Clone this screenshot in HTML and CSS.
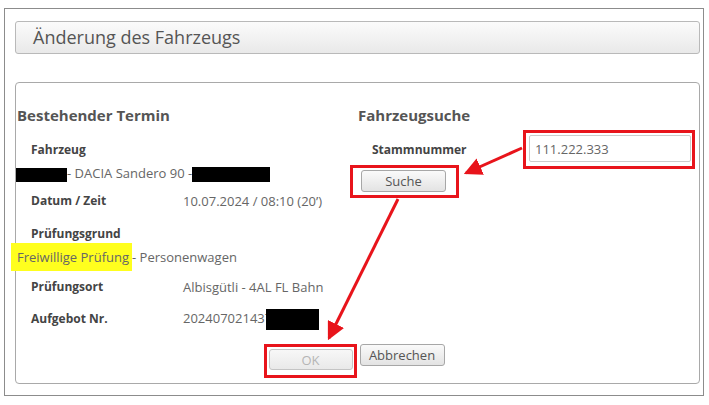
FILE: index.html
```html
<!DOCTYPE html>
<html lang="de">
<head>
  <meta charset="UTF-8">
  <meta name="viewport" content="width=device-width, initial-scale=1.0">
  <title>Änderung des Fahrzeugs</title>
  <link rel="stylesheet" href="styles.css">
</head>
<body>
  <div class="dialog">
    <div class="dialog-title">Änderung des Fahrzeugs</div>

    <div class="panel">
      <div class="columns">
        <div class="col">
          <h3>Bestehender Termin</h3>

          <div class="caption caption-first">Fahrzeug</div>
          <div class="line"><span class="redact redact-a"></span>- DACIA Sandero 90 -<span class="redact redact-b"></span></div>

          <div class="field field-date">
            <span class="label">Datum / Zeit</span>
            <span class="value">10.07.2024 / 08:10 (20’)</span>
          </div>

          <div class="caption">Prüfungsgrund</div>
          <div class="line"><span class="highlight">Freiwillige Prüfung</span>- Personenwagen</div>

          <div class="field field-place">
            <span class="label">Prüfungsort</span>
            <span class="value">Albisgütli - 4AL FL Bahn</span>
          </div>

          <div class="field field-number">
            <span class="label">Aufgebot Nr.</span>
            <span class="value">202407021437<span class="redact redact-c"></span></span>
          </div>
        </div>

        <div class="col">
          <h3>Fahrzeugsuche</h3>

          <div class="search-row">
            <label class="label search-label" for="stammnummer">Stammnummer</label>
            <span class="mark mark-input">
              <input type="text" id="stammnummer" value="111.222.333">
            </span>
          </div>

          <span class="mark mark-search">
            <button type="button" class="btn">Suche</button>
          </span>
        </div>
      </div>

      <div class="actions">
        <span class="mark mark-ok">
          <button type="button" class="btn" disabled>OK</button>
        </span>
        <button type="button" class="btn">Abbrechen</button>
      </div>
    </div>
  </div>

  <!-- annotation arrows drawn over the screenshot -->
  <svg class="arrows" width="709" height="405" viewBox="0 0 709 405">
    <defs>
      <marker id="head" markerWidth="6" markerHeight="6" refX="5.2" refY="3" orient="auto" markerUnits="strokeWidth">
        <path d="M0,0 L6,3 L0,6 Z" fill="#e8141b"/>
      </marker>
    </defs>
    <line x1="522" y1="148" x2="466" y2="173" stroke="#e8141b" stroke-width="3" marker-end="url(#head)"/>
    <line x1="398" y1="199" x2="329" y2="338" stroke="#e8141b" stroke-width="3" marker-end="url(#head)"/>
  </svg>
</body>
</html>
```

FILE: styles.css
```css
* {
  margin: 0;
  padding: 0;
  box-sizing: border-box;
  font-family: 'Open Sans', 'Liberation Sans', sans-serif;
}

body {
  background: #fff;
  position: relative;
  width: 709px;
  height: 405px;
  overflow: hidden;
}

.dialog {
  margin: 8px 0 0 4px;
  width: 700px;
  height: 388px;
  border: 1px solid #8c8c8c;
  padding: 12px 3px 0 10px;
}

.dialog-title {
  height: 33px;
  border: 1px solid #b9b9b9;
  border-radius: 3px;
  background: linear-gradient(#fbfbfb, #e9e9e9);
  padding-left: 17px;
  font-size: 18px;
  line-height: 30px;
  color: #555;
}

.panel {
  margin-top: 28px;
  height: 302px;
  border: 1px solid #a9a9a9;
  border-radius: 4px;
  padding: 21px 0 0 1px;
}

.columns {
  display: grid;
  grid-template-columns: 341px 1fr;
}

h3 {
  font-size: 15px;
  font-weight: 700;
  line-height: 22px;
  color: #555;
}

.caption,
.label {
  font-size: 12px;
  font-weight: 700;
  color: #444;
}

.caption {
  padding-left: 14px;
  line-height: 20px;
  margin-top: 13px;
}

.caption-first {
  margin-top: 14px;
}

.line {
  margin-top: 3px;
  font-size: 13px;
  line-height: 20px;
  color: #666;
}

.field {
  display: grid;
  grid-template-columns: 152px 1fr;
  align-items: center;
  padding-left: 14px;
  line-height: 20px;
  margin-top: 8px;
}

.field-place {
  margin-top: 10px;
}

.field-number {
  margin-top: 11px;
}

.value {
  font-size: 13px;
  color: #666;
}

.redact {
  display: inline-block;
  background: #000;
  vertical-align: middle;
}

.redact-a {
  width: 51px;
  height: 14px;
  margin-left: -1px;
}

.redact-b {
  width: 78px;
  height: 15px;
}

.redact-c {
  width: 53px;
  height: 21px;
  margin-left: -6px;
}

.highlight {
  background: #ffff1e;
  margin-left: -6px;
  padding: 5px 3px 5px 6px;
}

.search-row {
  display: flex;
  align-items: center;
  margin-top: 4px;
}

.search-label {
  width: 165px;
  padding-left: 14px;
}

.mark {
  display: inline-block;
  border: 3px solid #e8141b;
}

.mark-input {
  padding: 2px 1px 4px 3px;
}

input {
  display: block;
  width: 162px;
  height: 27px;
  border: 1px solid #ccc;
  border-radius: 2px;
  padding: 0 5px;
  font-size: 13px;
  color: #666;
  outline: none;
}

.mark-search {
  margin: -4px 0 0 -8px;
  padding: 2px 10px 3px 8px;
}

.btn {
  display: block;
  width: 85px;
  height: 22px;
  border: 1px solid #a7a7a7;
  border-radius: 3px;
  background: linear-gradient(#fafafa, #e3e3e3);
  font-size: 13px;
  color: #555;
}

.btn:disabled {
  color: #b5b5b5;
  border-color: #c4c4c4;
  background: linear-gradient(#f7f7f7, #e9e9e9);
}

.actions {
  display: flex;
  justify-content: center;
  align-items: flex-start;
  gap: 3px;
  margin-top: 14px;
  padding-right: 8px;
}

.mark-ok {
  padding: 2px 1px 5px 2px;
}

.mark-ok .btn {
  width: 84px;
  height: 21px;
}

.arrows {
  position: absolute;
  top: 0;
  left: 0;
  pointer-events: none;
}
```
